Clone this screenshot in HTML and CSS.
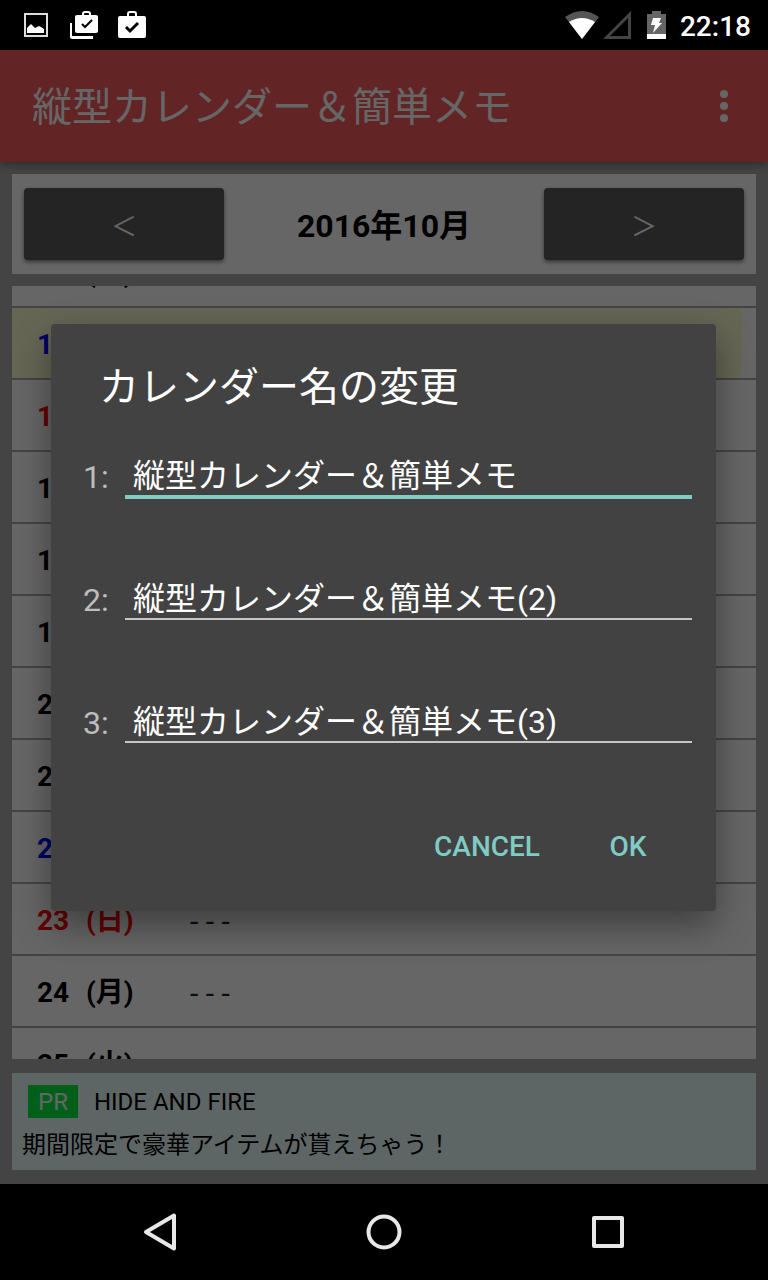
FILE: index.html
```
<!DOCTYPE html>
<html lang="ja">
<head>
  <meta charset="UTF-8" />
  <meta name="viewport" content="width=device-width, initial-scale=1.0"/>
  <title>縦型カレンダー＆簡単メモ</title>
  <link rel="stylesheet" href="styles.css">
</head>
<body>
  <div class="status-bar">
    <div class="status-left">
      <svg width="24" height="24" viewBox="0 0 24 24">
        <rect x="1" y="1" width="22" height="22" fill="none" stroke="#ddd" stroke-width="2"/>
        <path d="M3 20v-5l4-4 4 4 4-2 2 1 3 2v4z" fill="#fff"/>
      </svg>
      <svg width="28" height="28" viewBox="0 0 28 28">
        <path d="M0 12h2v13h21v3H2q-2 0-2-2z" fill="#fff"/>
        <path d="M13 5V3q0-2 2-2h3q2 0 2 2v2" fill="none" stroke="#fff" stroke-width="2"/>
        <rect x="5" y="4" width="23" height="18" rx="2" fill="#fff"/>
        <path d="M12 13l3 3 7-7" fill="none" stroke="#000" stroke-width="2"/>
      </svg>
      <svg width="28" height="28" viewBox="0 0 28 28">
        <path d="M10 6V3q0-2 2-2h4q2 0 2 2v3" fill="none" stroke="#fff" stroke-width="2"/>
        <rect x="0" y="5" width="28" height="22" rx="2" fill="#fff"/>
        <path d="M8 16l4 4 8-8" fill="none" stroke="#000" stroke-width="3"/>
      </svg>
    </div>
    <div class="status-right">
      <svg class="wifi" width="34" height="28" viewBox="0 0 34 28">
        <path d="M0 6q17-12 34 0L17 28z" fill="#555"/>
        <path d="M4 11q13-8 26 0L17 28z" fill="#fff"/>
      </svg>
      <svg class="signal" width="28" height="28" viewBox="0 0 28 28">
        <path d="M3.5 26.5h23v-23z" fill="none" stroke="#444" stroke-width="3"/>
      </svg>
      <svg class="battery" width="19" height="28" viewBox="0 0 19 28">
        <path d="M0 3h5V0h9v3h5v20H0z" fill="#666"/>
        <path d="M0 23h19v5H0z" fill="#fff"/>
        <path d="M6 7h8l-2 5h3L6 22l2-8H4z" fill="#fff"/>
      </svg>
      <span class="clock">22:18</span>
    </div>
  </div>

  <div class="app">
    <header class="app-bar">
      <h1>縦型カレンダー＆簡単メモ</h1>
      <button class="menu" aria-label="メニュー">
        <svg width="8" height="32" viewBox="0 0 8 32" fill="#fff">
          <circle cx="4" cy="4" r="4"/><circle cx="4" cy="16" r="4"/><circle cx="4" cy="28" r="4"/>
        </svg>
      </button>
    </header>

    <main>
      <div class="month">
        <button>＜</button>
        <h2>2016年10月</h2>
        <button>＞</button>
      </div>

      <div class="days">
        <table>
          <tr><td class="num">14</td><td class="week">(金)</td><td class="memo">- - -</td></tr>
          <tr class="sat today"><td class="num">15</td><td class="week">(土)</td><td class="memo">- - -</td></tr>
          <tr class="sun"><td class="num">16</td><td class="week">(日)</td><td class="memo">- - -</td></tr>
          <tr><td class="num">17</td><td class="week">(月)</td><td class="memo">- - -</td></tr>
          <tr><td class="num">18</td><td class="week">(火)</td><td class="memo">- - -</td></tr>
          <tr><td class="num">19</td><td class="week">(水)</td><td class="memo">- - -</td></tr>
          <tr><td class="num">20</td><td class="week">(木)</td><td class="memo">- - -</td></tr>
          <tr><td class="num">21</td><td class="week">(金)</td><td class="memo">- - -</td></tr>
          <tr class="sat"><td class="num">22</td><td class="week">(土)</td><td class="memo">- - -</td></tr>
          <tr class="sun"><td class="num">23</td><td class="week">(日)</td><td class="memo">- - -</td></tr>
          <tr><td class="num">24</td><td class="week">(月)</td><td class="memo">- - -</td></tr>
          <tr><td class="num">25</td><td class="week">(火)</td><td class="memo">- - -</td></tr>
        </table>
      </div>

      <div class="ad">
        <div class="ad-head"><span class="pr">PR</span><span>HIDE AND FIRE</span></div>
        <p>期間限定で豪華アイテムが貰えちゃう！</p>
      </div>
    </main>

    <div class="overlay">
      <form class="dialog">
        <h2>カレンダー名の変更</h2>
        <div class="fields">
          <label for="name1">1:</label>
          <input id="name1" class="active" type="text" value="縦型カレンダー＆簡単メモ">
          <label for="name2">2:</label>
          <input id="name2" type="text" value="縦型カレンダー＆簡単メモ(2)">
          <label for="name3">3:</label>
          <input id="name3" type="text" value="縦型カレンダー＆簡単メモ(3)">
        </div>
        <div class="actions">
          <button type="button">CANCEL</button>
          <button type="button">OK</button>
        </div>
      </form>
    </div>
  </div>

  <nav class="nav-bar">
    <button aria-label="戻る">
      <svg width="40" height="40" viewBox="0 0 40 40">
        <path d="M34 3.5v33L6 20z"/>
      </svg>
    </button>
    <button aria-label="ホーム">
      <svg width="40" height="40" viewBox="0 0 40 40">
        <circle cx="20" cy="20" r="15.5"/>
      </svg>
    </button>
    <button aria-label="履歴">
      <svg width="40" height="40" viewBox="0 0 40 40">
        <rect x="6" y="6" width="28" height="28"/>
      </svg>
    </button>
  </nav>
</body>
</html>
```

FILE: styles.css
```
* {
  margin: 0; padding: 0; box-sizing: border-box;
}

body {
  height: 100vh;
  display: flex;
  flex-direction: column;
  font-family: Roboto, 'Noto Sans CJK JP', sans-serif;
  background: #000;
  color: #000;
  overflow: hidden;
}

button, input {
  font-family: inherit;
  border: none;
  background: none;
}

svg {
  display: block;
}

/* status bar */
.status-bar {
  height: 50px;
  flex-shrink: 0;
  display: flex;
  justify-content: space-between;
  align-items: center;
  padding: 0 17px 0 24px;
  color: #fff;
}

.status-left, .status-right {
  display: flex;
  align-items: center;
}

.status-left {
  gap: 20px;
}

.status-left svg:first-child {
  margin-right: 2px;
}

.signal {
  margin: 0 16px 0 4px;
}

.clock {
  margin-left: 14px;
  padding-top: 4px;
  font-size: 28px;
  font-weight: 500;
  line-height: 32px;
}

/* app */
.app {
  position: relative;
  flex: 1;
  min-height: 0;
  display: flex;
  flex-direction: column;
  background: #aaa;
}

.app-bar {
  height: 112px;
  flex-shrink: 0;
  display: flex;
  align-items: center;
  justify-content: space-between;
  padding: 0 32px;
  background: #f65a5a;
  color: #fff;
  box-shadow: 0 4px 8px rgba(0, 0, 0, 0.3);
}

.app-bar h1 {
  padding-bottom: 4px;
  font-size: 40px;
  font-weight: 400;
}

.menu {
  padding: 0 8px;
}

main {
  flex: 1;
  min-height: 0;
  display: flex;
  flex-direction: column;
  padding: 12px 12px 14px;
}

.month {
  display: grid;
  grid-template-columns: 200px 1fr 200px;
  align-items: center;
  padding: 14px 12px;
  margin-bottom: 12px;
  background: #fff;
}

.month button {
  height: 72px;
  border-radius: 4px;
  background: #5a5a5a;
  color: #fff;
  font-size: 26px;
  box-shadow: 0 2px 4px rgba(0, 0, 0, 0.5);
}

.month h2 {
  padding-top: 4px;
  font-size: 32px;
  line-height: 40px;
  text-align: center;
}

.days {
  flex: 1;
  min-height: 0;
  overflow: hidden;
  background: #fff;
}

/* list is scrolled a little past the 14th */
.days table {
  width: 100%;
  margin-top: -50px;
  border-collapse: separate;
  border-spacing: 0;
}

.days td {
  height: 72px;
  padding-top: 4px;
  border-bottom: 2px solid #aaa;
  font-size: 28px;
  line-height: 32px;
}

.days .num {
  width: 74px;
  padding-left: 25px;
  font-weight: bold;
}

.days .week {
  width: 104px;
  font-weight: bold;
}

.days .memo {
  padding-top: 6px;
  color: #222;
  font-size: 30px;
}

.sat {
  color: #00f;
}

.sun {
  color: #f00;
}

.today td {
  background: #ffffd4;
}

.today .memo {
  background: linear-gradient(#ffffd4, #ffffd4) no-repeat 0 0 / calc(100% - 14px) 100%;
}

.ad {
  margin-top: 14px;
  padding: 12px 10px 7px;
  background: #ebfffc;
  font-size: 24px;
}

.ad-head {
  display: flex;
  align-items: center;
  gap: 16px;
  padding-left: 6px;
  line-height: 33px;
}

.ad-head span {
  padding-top: 2px;
  line-height: 31px;
}

.ad-head .pr {
  padding: 2px 10px 0;
  background: #00f040;
  color: #fff;
}

.ad p {
  margin-top: 9px;
  line-height: 36px;
}

/* dialog */
.overlay {
  position: absolute;
  top: 0; left: 0;
  width: 100%; height: 100%;
  display: flex;
  align-items: center;
  padding: 0 52px 0 51px;
  background: rgba(0, 0, 0, 0.6);
}

.dialog {
  width: 100%;
  padding: 36px 24px 28px 32px;
  border-radius: 4px;
  background: #424242;
  color: #fff;
  box-shadow: 0 14px 36px rgba(0, 0, 0, 0.4);
}

.dialog h2 {
  padding-left: 16px;
  font-size: 40px;
  font-weight: 400;
  line-height: 56px;
}

.fields {
  display: grid;
  grid-template-columns: 42px 1fr;
  row-gap: 73px;
  margin-top: 31px;
}

.fields label, .fields input {
  height: 50px;
  padding-top: 10px;
  font-size: 32px;
  line-height: 40px;
}

.fields label {
  color: #bdbdbd;
}

.fields input {
  min-width: 0;
  padding: 4px 0 0 8px;
  border-bottom: 2px solid #c6c6c6;
  color: #fff;
  outline: none;
}

.fields input.active {
  border-color: #80cbc4;
  box-shadow: 0 2px 0 #80cbc4;
}

.actions {
  display: flex;
  justify-content: flex-end;
  gap: 8px;
  margin-top: 68px;
}

.actions button {
  min-width: 128px;
  height: 72px;
  padding: 0 16px;
  color: #80cbc4;
  font-size: 28px;
  font-weight: 500;
}

/* system navigation */
.nav-bar {
  height: 96px;
  flex-shrink: 0;
  display: flex;
  justify-content: center;
}

.nav-bar button {
  width: 224px;
  display: flex;
  align-items: center;
  justify-content: center;
}

.nav-bar svg {
  fill: none;
  stroke: #e8e8e8;
  stroke-width: 4;
  stroke-linejoin: round;
}
```
